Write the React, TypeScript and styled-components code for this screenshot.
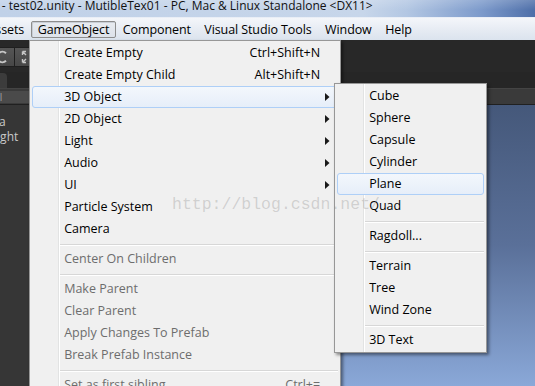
import styled, { createGlobalStyle, css } from "styled-components"

const GlobalStyle = createGlobalStyle`
  html, body {
    margin: 0;
    padding: 0;
  }
  body {
    width: 535px;
    height: 386px;
    overflow: hidden;
    background: #282828;
    font-family: "Open Sans", "Liberation Sans", sans-serif;
  }
`

type Entry =
    | "sep"
    | {
          label: string
          shortcut?: string
          arrow?: boolean
          disabled?: boolean
          active?: boolean
          sub?: Entry[]
      }

const objectItems: Entry[] = [
    { label: "Cube" },
    { label: "Sphere" },
    { label: "Capsule" },
    { label: "Cylinder" },
    { label: "Plane", active: true },
    { label: "Quad" },
    "sep",
    { label: "Ragdoll..." },
    "sep",
    { label: "Terrain" },
    { label: "Tree" },
    { label: "Wind Zone" },
    "sep",
    { label: "3D Text" },
]

const gameObjectItems: Entry[] = [
    { label: "Create Empty", shortcut: "Ctrl+Shift+N" },
    { label: "Create Empty Child", shortcut: "Alt+Shift+N" },
    { label: "3D Object", arrow: true, active: true, sub: objectItems },
    { label: "2D Object", arrow: true },
    { label: "Light", arrow: true },
    { label: "Audio", arrow: true },
    { label: "UI", arrow: true },
    { label: "Particle System" },
    { label: "Camera" },
    "sep",
    { label: "Center On Children", disabled: true },
    "sep",
    { label: "Make Parent", disabled: true },
    { label: "Clear Parent", disabled: true },
    { label: "Apply Changes To Prefab", disabled: true },
    { label: "Break Prefab Instance", disabled: true },
    "sep",
    { label: "Set as first sibling", shortcut: "Ctrl+=", disabled: true },
    { label: "Set as last sibling", shortcut: "Ctrl+-", disabled: true },
    { label: "Move To View", shortcut: "Ctrl+Alt+F" },
]

const Menu = ({ items, width, top, left }: { items: Entry[]; width: number; top: string; left: string }) => (
    <Dropdown $width={width} $top={top} $left={left}>
        {items.map((it, i) =>
            it === "sep" ? (
                <Separator key={i} />
            ) : (
                <Row key={i} $active={it.active} $disabled={it.disabled}>
                    <Label>{it.label}</Label>
                    {it.shortcut && <Shortcut>{it.shortcut}</Shortcut>}
                    <ArrowSlot>
                        {it.arrow && (
                            <svg width="5" height="8" viewBox="0 0 5 8">
                                <polygon points="0,0 4.5,4 0,8" fill="#1a1a1a" />
                            </svg>
                        )}
                    </ArrowSlot>
                    {it.sub && <Menu items={it.sub} width={153} top="-4px" left="calc(100% - 3px)" />}
                </Row>
            )
        )}
    </Dropdown>
)

export default function App() {
    return (
        <>
            <GlobalStyle />
            <Window>
                <TitleBar>
                    <TitleText>) - test02.unity - MutibleTex01 - PC, Mac &amp; Linux Standalone &lt;DX11&gt;</TitleText>
                </TitleBar>
                <MenuBar>
                    <MenuTitle $shift={-19}>Assets</MenuTitle>
                    <MenuTitle $open>
                        GameObject
                        <Menu items={gameObjectItems} width={312} top="calc(100% + 3px)" left="-3px" />
                    </MenuTitle>
                    <MenuTitle>Component</MenuTitle>
                    <MenuTitle>Visual Studio Tools</MenuTitle>
                    <MenuTitle>Window</MenuTitle>
                    <MenuTitle>Help</MenuTitle>
                </MenuBar>
                <Workspace>
                    <MainToolbar>
                        <ToolGroup>
                            <ToolButton>
                                <svg width="14" height="14" viewBox="0 0 14 14">
                                    <path d="M11 3.2 A5.2 5.2 0 1 0 11 10.8" fill="none" stroke="#c6c6c6" strokeWidth="2" />
                                </svg>
                            </ToolButton>
                            <ToolButton>
                                <svg width="14" height="14" viewBox="0 0 14 14" fill="none" stroke="#c6c6c6" strokeWidth="1.4">
                                    <path d="M1.5 1.5 L5 5 M1.5 1.5 H5 M1.5 1.5 V5" />
                                    <path d="M1.5 12.5 L5 9 M1.5 12.5 H5 M1.5 12.5 V9" />
                                    <path d="M12.5 1.5 L9 5 M12.5 1.5 H9 M12.5 1.5 V5" />
                                    <path d="M12.5 12.5 L9 9 M12.5 12.5 H9 M12.5 12.5 V9" />
                                </svg>
                            </ToolButton>
                            <ToolButton />
                        </ToolGroup>
                    </MainToolbar>
                    <Panels>
                        <Hierarchy>
                            <TabRow>
                                <Tab $width={48} />
                            </TabRow>
                            <PanelToolbar>
                                <SearchField>All</SearchField>
                            </PanelToolbar>
                            <TreeList>
                                <TreeItem $shift={-69}>Main Camera</TreeItem>
                                <TreeItem $shift={-73}>Directional Light</TreeItem>
                            </TreeList>
                        </Hierarchy>
                        <SceneView>
                            <TabRow />
                            <PanelToolbar />
                            <SceneCanvas />
                        </SceneView>
                    </Panels>
                </Workspace>
                <Watermark>http://blog.csdn.net/</Watermark>
            </Window>
        </>
    )
}

const Window = styled.div`
    position: relative;
    width: 535px;
    height: 386px;
    display: flex;
    flex-direction: column;
    overflow: hidden;
`

const TitleBar = styled.div`
    flex: none;
    height: 17px;
    overflow: hidden;
    white-space: nowrap;
    background:
        linear-gradient(rgba(255, 255, 255, 0.18), rgba(255, 255, 255, 0) 60%),
        linear-gradient(to right, #c0d1e8 0%, #c7d6ea 68%, #b3c7e3 76%, #7c9acb 90%, #4d6ea8 100%);
`

const TitleText = styled.span`
    display: block;
    margin: -2px 0 0 -5px;
    font-size: 12px;
    line-height: 16px;
    color: #111;
`

const MenuBar = styled.div`
    flex: none;
    height: 23px;
    box-sizing: border-box;
    padding-bottom: 2px;
    display: flex;
    align-items: flex-end;
    position: relative;
    z-index: 5;
    background: linear-gradient(#f4f6fa, #e6ebf3 55%, #dbe3ee);
    border-top: 1px solid #e9eef6;
`

const MenuTitle = styled.div<{ $open?: boolean; $shift?: number }>`
    position: relative;
    height: 17px;
    box-sizing: border-box;
    padding: 0 6px 0 5.5px;
    margin-left: ${(p) => (p.$shift !== undefined ? `${p.$shift}px` : "0")};
    border: 1px solid transparent;
    border-radius: 2px;
    font-size: 12.5px;
    line-height: 15px;
    letter-spacing: -0.1px;
    color: #000;
    white-space: nowrap;
    ${(p) =>
        p.$open &&
        css`
            border-color: #8d8d8d;
            background: linear-gradient(#e8ebf0, #dde2ea);
            box-shadow: inset 1px 1px 0 #c9ced6;
        `}
`

const Dropdown = styled.div<{ $width: number; $top: string; $left: string }>`
    position: absolute;
    top: ${(p) => p.$top};
    left: ${(p) => p.$left};
    width: ${(p) => p.$width}px;
    box-sizing: border-box;
    padding: 1px;
    border: 1px solid #979797;
    background:
        linear-gradient(
            to right,
            transparent 28px,
            #e2e3e3 28px,
            #e2e3e3 29px,
            #ffffff 29px,
            #ffffff 30px,
            transparent 30px
        ),
        #f0f0f0;
    box-shadow: 2px 2px 3px rgba(0, 0, 0, 0.45);
    z-index: 20;
    text-align: left;
    letter-spacing: 0;
`

const Row = styled.div<{ $active?: boolean; $disabled?: boolean }>`
    position: relative;
    height: 22px;
    margin: 0 1px;
    box-sizing: border-box;
    padding-left: 31px;
    display: flex;
    align-items: center;
    border: 1px solid transparent;
    border-radius: 3px;
    font-size: 12.5px;
    line-height: 16px;
    color: ${(p) => (p.$disabled ? "#6d6d6d" : "#000")};
    white-space: nowrap;
    ${(p) =>
        p.$active &&
        css`
            border-color: #aecff7;
            background: linear-gradient(#f3f7fc, #e6eef9);
        `}
`

const Label = styled.span`
    flex: 1;
`

const Shortcut = styled.span`
    flex: none;
`

const ArrowSlot = styled.span`
    flex: none;
    width: 17px;
    box-sizing: border-box;
    padding-left: 5px;
    display: flex;
    align-items: center;
`

const Separator = styled.div`
    height: 8px;
    margin: 0 1px 0 29px;
    background: linear-gradient(transparent 4px, #d7d7d7 4px, #d7d7d7 5px, #ffffff 5px, #ffffff 6px, transparent 6px);
`

const Workspace = styled.div`
    flex: 1;
    min-height: 0;
    display: flex;
    flex-direction: column;
    background: #282828;
`

const MainToolbar = styled.div`
    flex: none;
    height: 32px;
    display: flex;
    align-items: center;
`

const ToolGroup = styled.div`
    display: flex;
    margin-left: -11px;
    margin-top: 2px;
`

const ToolButton = styled.div`
    width: 26px;
    height: 20px;
    box-sizing: border-box;
    display: flex;
    align-items: center;
    justify-content: center;
    background: linear-gradient(#555555, #474747);
    border: 1px solid #1f1f1f;
    border-left-width: 0;
    &:first-child {
        border-left-width: 1px;
    }
`

const Panels = styled.div`
    flex: 1;
    min-height: 0;
    display: flex;
`

const Hierarchy = styled.div`
    flex: none;
    width: 250px;
    display: flex;
    flex-direction: column;
    background: #363636;
`

const TabRow = styled.div`
    flex: none;
    height: 16px;
    display: flex;
    align-items: flex-end;
    background: #262626;
`

const Tab = styled.div<{ $width: number }>`
    width: ${(p) => p.$width}px;
    height: 15px;
    margin-left: -41px;
    background: #3c3c3c;
    border-radius: 0 4px 0 0;
`

const PanelToolbar = styled.div`
    flex: none;
    height: 17px;
    box-sizing: border-box;
    display: flex;
    align-items: center;
    background: #3a3a3a;
    border-top: 1px solid #444;
    border-bottom: 1px solid #202020;
`

const SearchField = styled.div`
    height: 12px;
    width: 140px;
    margin-left: -9px;
    font-size: 10px;
    line-height: 12px;
    color: #a0a0a0;
    background: #4a4a4a;
    border-radius: 0 6px 6px 0;
`

const TreeList = styled.div`
    padding-top: 10px;
    display: flex;
    flex-direction: column;
    gap: 2px;
`

const TreeItem = styled.div<{ $shift: number }>`
    margin-left: ${(p) => p.$shift}px;
    font-size: 12px;
    line-height: 13px;
    color: #c9c9c9;
    white-space: nowrap;
`

const SceneView = styled.div`
    flex: 1;
    display: flex;
    flex-direction: column;
`

const SceneCanvas = styled.div`
    flex: 1;
    background: linear-gradient(#45587a 0%, #5a7099 50%, #8aa8d8 100%);
`

const Watermark = styled.div`
    position: absolute;
    left: 172px;
    top: 195px;
    z-index: 50;
    pointer-events: none;
    font-family: "Liberation Mono", monospace;
    font-size: 16.5px;
    line-height: 20px;
    color: rgba(140, 140, 140, 0.32);
    white-space: nowrap;
`
